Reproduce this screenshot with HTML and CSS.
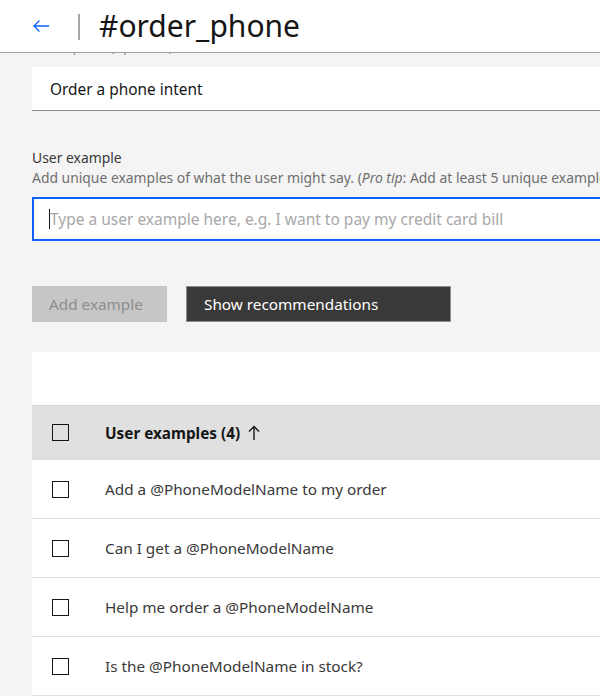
FILE: index.html
```html
<!DOCTYPE html>
<html lang="en">
<head>
<meta charset="utf-8">
<title>#order_phone</title>
<link rel="stylesheet" href="styles.css">
</head>
<body>
<header class="topbar">
  <svg class="back" width="18" height="14" viewBox="0 0 18 14" aria-hidden="true">
    <path d="M17 7H2M7.5 1.5L2 7l5.5 5.5" fill="none" stroke="#0f62fe" stroke-width="1.3"/>
  </svg>
  <span class="divider"></span>
  <h1 class="title">#order_phone</h1>
</header>
<main class="main">
  <div class="clip"><div class="clip-label">Description (optional)</div></div>
  <div class="field-text">Order a phone intent</div>

  <div class="label">User example</div>
  <div class="helper">Add unique examples of what the user might say. (<em>Pro tip</em>: Add at least 5 unique examples to help Watson understand)</div>
  <div class="field-focus"><span class="cursor"></span><span class="placeholder">Type a user example here, e.g. I want to pay my credit card bill</span></div>

  <div class="buttons">
    <button class="btn btn-disabled">Add example</button>
    <button class="btn btn-dark">Show recommendations</button>
  </div>

  <section class="table">
    <div class="toolbar"></div>
    <div class="row row-head">
      <span class="check"></span>
      <span class="head-text">User examples (4)</span>
      <svg class="sort" width="12" height="16" viewBox="0 0 12 16" aria-hidden="true">
        <path d="M6 15V1.5M1 6.5L6 1.5l5 5" fill="none" stroke="#161616" stroke-width="1.4"/>
      </svg>
    </div>
    <div class="row"><span class="check"></span><span class="cell">Add a @PhoneModelName to my order</span></div>
    <div class="row"><span class="check"></span><span class="cell">Can I get a @PhoneModelName</span></div>
    <div class="row"><span class="check"></span><span class="cell">Help me order a @PhoneModelName</span></div>
    <div class="row"><span class="check"></span><span class="cell">Is the @PhoneModelName in stock?</span></div>
  </section>
</main>
</body>
</html>
```
FILE: styles.css
```css
html, body {
  margin: 0;
  padding: 0;
}
body {
  background: #f4f4f4;
  font-family: "Noto Sans", "Open Sans", sans-serif;
  color: #161616;
  overflow: hidden;
  width: 600px;
  height: 696px;
}
.topbar {
  height: 52px;
  background: #ffffff;
  border-bottom: 1px solid #a0a0a0;
  display: flex;
  align-items: center;
  position: relative;
  z-index: 2;
}
.back {
  margin-left: 32px;
  margin-top: -1px;
}
.divider {
  width: 2px;
  height: 26px;
  background: #a8a8a8;
  margin-left: 28px;
  margin-top: 2px;
}
.title {
  margin: 0 0 0 19px;
  font-weight: 400;
  font-size: 30px;
  line-height: 40px;
  color: #161616;
  white-space: nowrap;
}
.main {
  padding-left: 32px;
  width: 760px;
}
.clip {
  height: 14px;
  overflow: hidden;
}
.clip-label {
  font-size: 13.9px;
  line-height: 18px;
  margin-top: -16px;
  color: #8d8d8d;
}
.field-text {
  height: 43px;
  background: #ffffff;
  border-bottom: 1px solid #8d8d8d;
  padding-left: 18px;
  font-size: 15.4px;
  line-height: 45px;
  color: #161616;
}
.label {
  margin-top: 38px;
  font-size: 13.9px;
  line-height: 18px;
  color: #393939;
}
.helper {
  margin-top: 2px;
  font-size: 13.9px;
  line-height: 18px;
  color: #6f6f6f;
  white-space: nowrap;
}
.field-focus {
  margin-top: 10px;
  height: 40px;
  background: #ffffff;
  border: 2px solid #0f62fe;
  display: flex;
  align-items: center;
  padding-left: 15px;
}
.cursor {
  width: 1px;
  height: 20px;
  background: #161616;
}
.placeholder {
  font-size: 15.5px;
  color: #a8a8a8;
  white-space: nowrap;
}
.buttons {
  margin-top: 45px;
  display: flex;
  gap: 19px;
}
.btn {
  height: 36px;
  border: 0;
  font-family: inherit;
  font-size: 15.3px;
  text-align: left;
  padding: 0 17px;
}
.btn-disabled {
  width: 135px;
  background: #c6c6c6;
  color: #8d8d8d;
}
.btn-dark {
  width: 265px;
  background: #393939;
  color: #ffffff;
  border: 1px solid #8d8d8d;
}
.table {
  margin-top: 30px;
  background: #ffffff;
}
.toolbar {
  height: 53px;
}
.row {
  height: 58px;
  display: flex;
  align-items: center;
  border-bottom: 1px solid #e0e0e0;
  font-size: 15.3px;
  color: #393939;
}
.row-head {
  height: 53px;
  background: #e0e0e0;
  border-top: 1px solid #d6d6d6;
  border-bottom: 1px solid #e0e0e0;
  font-weight: 700;
  color: #161616;
}
.check {
  width: 15px;
  height: 15px;
  border: 1.5px solid #161616;
  margin-left: 20px;
  margin-right: 36px;
  flex: none;
}
.head-text {
  white-space: nowrap;
}
.sort {
  margin-left: 8px;
}
.cell {
  white-space: nowrap;
}
```
